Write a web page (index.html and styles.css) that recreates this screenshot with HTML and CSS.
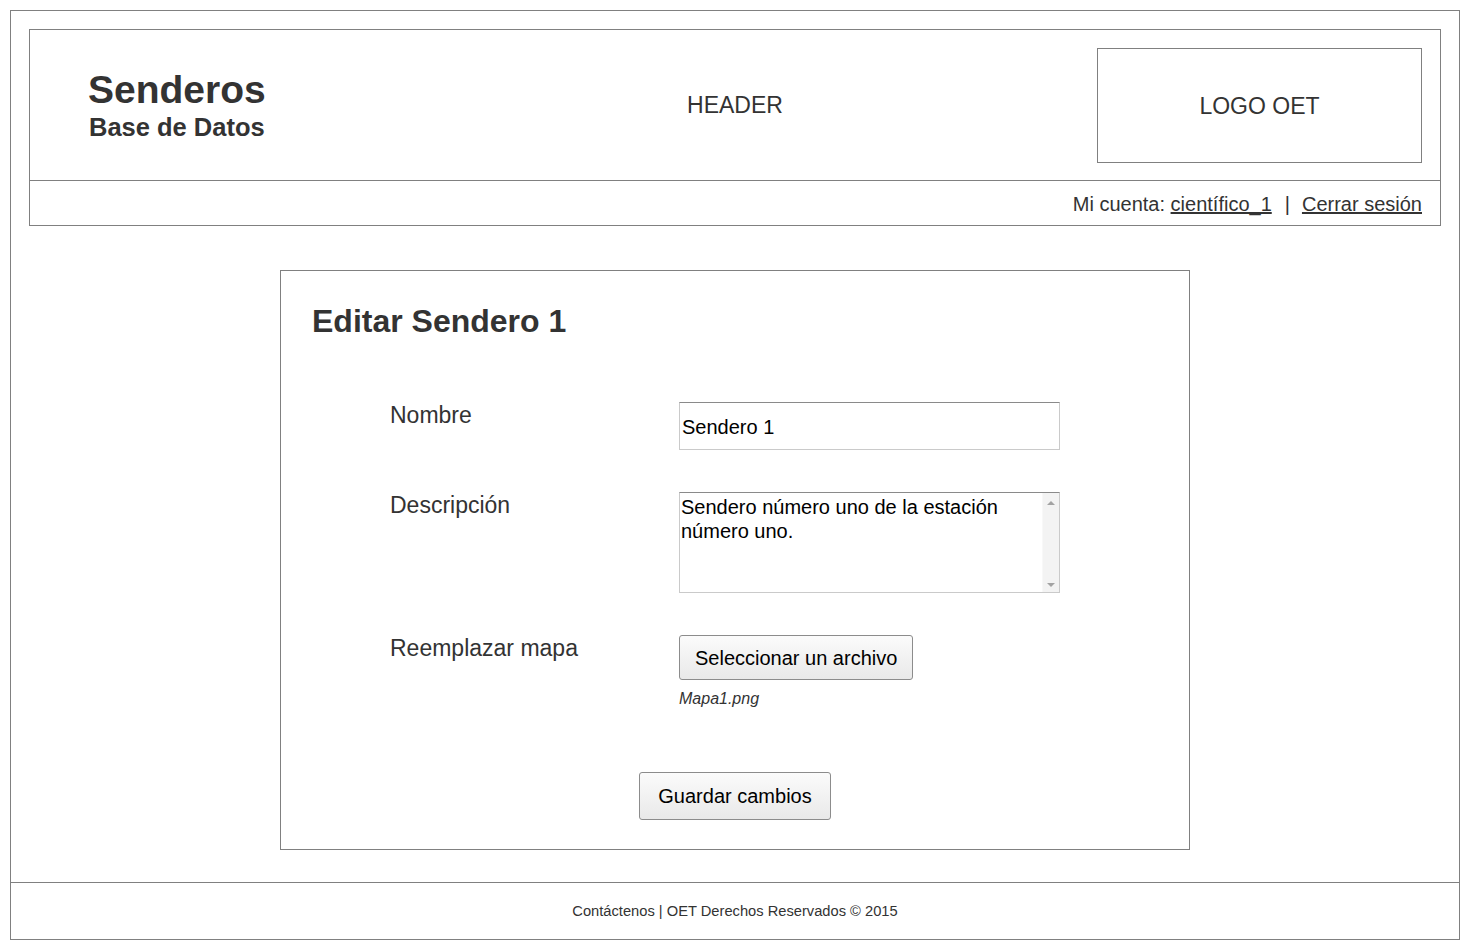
FILE: index.html
```html
<!DOCTYPE html>
<html lang="es">
<head>
<meta charset="utf-8">
<title>Editar Sendero 1</title>
<link rel="stylesheet" href="styles.css">
</head>
<body>
<div class="frame">
  <main class="main">
    <header class="header">
      <div class="header-top">
        <div class="brand">
          <div class="brand-title">Senderos</div>
          <div class="brand-sub">Base de Datos</div>
        </div>
        <div class="header-label">HEADER</div>
        <div class="logo">LOGO OET</div>
      </div>
      <div class="account">
        <span>Mi cuenta: <a href="#" class="link">científico_1</a></span><span class="sep">|</span><a href="#" class="link">Cerrar sesión</a>
      </div>
    </header>

    <section class="card">
      <h1 class="card-title">Editar Sendero 1</h1>
      <form class="form">
        <label class="label" for="nombre">Nombre</label>
        <div class="control">
          <input id="nombre" class="input" type="text" value="Sendero 1">
        </div>

        <label class="label" for="desc">Descripción</label>
        <div class="control">
          <div class="textarea-box">
            <textarea id="desc" class="textarea">Sendero número uno de la estación número uno.</textarea>
            <div class="scrollbar"><span class="arrow-up"></span><span class="arrow-down"></span></div>
          </div>
        </div>

        <div class="label">Reemplazar mapa</div>
        <div class="control">
          <button type="button" class="btn btn-file">Seleccionar un archivo</button>
          <div class="filename">Mapa1.png</div>
        </div>
      </form>
      <div class="actions">
        <button type="button" class="btn btn-save">Guardar cambios</button>
      </div>
    </section>
  </main>
  <footer class="footer">Contáctenos | OET Derechos Reservados © 2015</footer>
</div>
</body>
</html>
```

FILE: styles.css
```css
* { box-sizing: border-box; }
html, body { margin: 0; padding: 0; background: #fff; }
body {
  padding: 10px 0 0 10px;
  font-family: "Liberation Sans", Arial, sans-serif;
  color: #333;
}
.frame {
  width: 1450px;
  height: 930px;
  border: 1px solid #808080;
  display: flex;
  flex-direction: column;
}
.main {
  flex: 1;
  padding: 18px 18px 0;
}
.header {
  border: 1px solid #808080;
}
.header-top {
  height: 151px;
  border-bottom: 1px solid #808080;
  display: grid;
  grid-template-columns: 1fr auto 1fr;
  align-items: center;
  padding: 0 18px;
}
.brand {
  justify-self: start;
  margin: 0 0 3px 40px;
  display: flex;
  flex-direction: column;
  align-items: center;
  font-weight: bold;
  color: #333;
}
.brand-title {
  font-size: 39px;
  line-height: 45px;
}
.brand-sub {
  font-size: 25.5px;
  line-height: 28px;
  margin-top: 1px;
}
.header-label {
  font-size: 23px;
  line-height: 26px;
}
.logo {
  justify-self: end;
  width: 325px;
  height: 115px;
  border: 1px solid #808080;
  display: flex;
  align-items: center;
  justify-content: center;
  font-size: 23px;
  padding-top: 2px;
}
.account {
  height: 44px;
  display: flex;
  align-items: center;
  justify-content: flex-end;
  padding: 3px 18px 0;
  font-size: 20px;
}
.link { color: #333; text-decoration: underline; }
.sep { margin: 0 12px 0 13px; }

.card {
  width: 910px;
  margin: 44px auto 0;
  border: 1px solid #808080;
  padding: 32px 31px 29px;
}
.card-title {
  margin: 0;
  font-size: 32px;
  line-height: 37px;
  font-weight: bold;
  color: #333;
}
.form {
  margin: 62px 0 0 78px;
  display: grid;
  grid-template-columns: 289px 381px;
  row-gap: 42px;
  align-items: start;
}
.label {
  font-size: 23px;
  line-height: 23px;
  padding-top: 2px;
  color: #333;
}
.input {
  display: block;
  width: 381px;
  height: 48px;
  margin: 0;
  border: 1px solid #cacaca;
  border-top-color: #8a8a8a;
  padding: 2px 2px 0;
  font-family: "Liberation Sans", Arial, sans-serif;
  font-size: 20px;
  color: #000;
  background: #fff;
  outline: none;
}
.textarea-box {
  display: flex;
  width: 381px;
  height: 101px;
  border: 1px solid #cacaca;
  border-top-color: #8a8a8a;
  background: #fff;
}
.textarea {
  flex: 1;
  border: none;
  margin: 0;
  padding: 2px 1px;
  font-family: "Liberation Sans", Arial, sans-serif;
  font-size: 20px;
  line-height: 24px;
  color: #000;
  resize: none;
  overflow: hidden;
  outline: none;
  background: #fff;
}
.scrollbar {
  width: 17px;
  background: #f3f3f3;
  border-left: 1px solid #f8f8f8;
  display: flex;
  flex-direction: column;
  justify-content: space-between;
  align-items: center;
  padding: 8px 0 5px;
}
.arrow-up {
  width: 0; height: 0;
  border-left: 4px solid transparent;
  border-right: 4px solid transparent;
  border-bottom: 4px solid #a3a3a3;
}
.arrow-down {
  width: 0; height: 0;
  border-left: 4px solid transparent;
  border-right: 4px solid transparent;
  border-top: 4px solid #a3a3a3;
}
.btn {
  font-family: "Liberation Sans", Arial, sans-serif;
  font-size: 20px;
  color: #000;
  border: 1px solid #8c8c8c;
  border-radius: 3px;
  background: linear-gradient(#fbfbfb, #e9e9e9);
  margin: 0;
  cursor: pointer;
}
.btn-file {
  height: 45px;
  padding: 1px 15px 0;
}
.filename {
  margin-top: 10px;
  font-size: 16px;
  line-height: 18px;
  font-style: italic;
  color: #333;
}
.actions {
  display: flex;
  justify-content: center;
  margin-top: 64px;
}
.btn-save {
  height: 48px;
  padding: 1px 18px 0;
}
.footer {
  height: 57px;
  border-top: 1px solid #808080;
  display: flex;
  align-items: center;
  justify-content: center;
  font-size: 14.7px;
  color: #333;
}
```
